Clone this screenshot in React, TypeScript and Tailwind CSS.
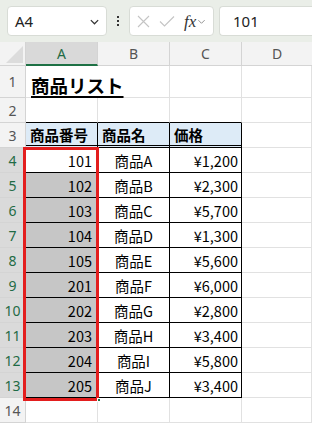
import React from "react";

type Item = { id: number; name: string; price: string };

const items: Item[] = [
  { id: 101, name: "商品A", price: "¥1,200" },
  { id: 102, name: "商品B", price: "¥2,300" },
  { id: 103, name: "商品C", price: "¥5,700" },
  { id: 104, name: "商品D", price: "¥1,300" },
  { id: 105, name: "商品E", price: "¥5,600" },
  { id: 201, name: "商品F", price: "¥6,000" },
  { id: 202, name: "商品G", price: "¥2,800" },
  { id: 203, name: "商品H", price: "¥3,400" },
  { id: 204, name: "商品I", price: "¥5,800" },
  { id: 205, name: "商品J", price: "¥3,400" },
];

const jp = "font-['Noto_Sans_CJK_JP',sans-serif]";
const ui = "font-['Noto_Sans',sans-serif]";

function RowHead({ n, selected, h = "h-[25px]" }: { n: number; selected?: boolean; h?: string }) {
  return (
    <div
      className={`${h} w-[26px] shrink-0 flex items-center justify-center border-r border-b border-[#d4d4d4] text-[14px] ${ui} ${
        selected ? "bg-[#dadada] text-[#1f6b45]" : "bg-[#f3f3f3] text-[#555]"
      }`}
    >
      {n}
    </div>
  );
}

function Toolbar() {
  return (
    <div className="h-[42px] bg-[#eaeee8] flex items-center pl-[7px] gap-0">
      <div className="h-[30px] w-[100px] rounded-[4px] bg-white border border-[#d8dcd6] flex items-center justify-between pl-[7px] pr-[6px]">
        <span className={`text-[15px] text-[#222] ${ui}`}>A4</span>
        <svg width="11" height="11" viewBox="0 0 12 12">
          <path d="M2 4.5 L6 8.5 L10 4.5" fill="none" stroke="#333" strokeWidth="1.3" />
        </svg>
      </div>
      <div className="w-[22px] flex flex-col items-center gap-[2px]">
        <span className="w-[2px] h-[2px] bg-[#333]" />
        <span className="w-[2px] h-[2px] bg-[#333]" />
        <span className="w-[2px] h-[2px] bg-[#333]" />
      </div>
      <div className="h-[30px] w-[85px] rounded-[4px] bg-white border border-[#d8dcd6] flex items-center pl-[7px] gap-[9px]">
        <svg width="13" height="13" viewBox="0 0 13 13">
          <path d="M1 1 L12 12 M12 1 L1 12" stroke="#c4c4c4" strokeWidth="1.1" />
        </svg>
        <svg width="16" height="13" viewBox="0 0 16 13">
          <path d="M1 6.5 L5.5 11 L15 1.5" fill="none" stroke="#c4c4c4" strokeWidth="1.1" />
        </svg>
        <div className="flex items-center gap-[1px]">
          <span className="font-['Liberation_Serif',serif] italic text-[17px] text-[#333] leading-none">fx</span>
          <svg width="9" height="9" viewBox="0 0 10 10">
            <path d="M1.5 3.5 L5 7 L8.5 3.5" fill="none" stroke="#888" strokeWidth="1" />
          </svg>
        </div>
      </div>
      <div className="h-[30px] flex-1 ml-[5px] rounded-l-[4px] bg-white border border-r-0 border-[#d8dcd6] flex items-center pl-[13px]">
        <span className={`text-[15px] text-[#222] ${ui}`}>101</span>
      </div>
    </div>
  );
}

export default function App() {
  const gridCell = "h-full shrink-0 border-r border-b border-[#e1e1e1]";
  return (
    <div className="w-[312px] h-[426px] overflow-hidden bg-white">
      <Toolbar />
      <div className="relative">
        {/* column headers */}
        <div className="h-[24px] flex">
          <div className="w-[26px] shrink-0 bg-[#f3f3f3] border-r border-b border-[#d4d4d4] flex items-end justify-end pr-[2px] pb-[2px]">
            <svg width="17" height="17" viewBox="0 0 17 17">
              <path d="M17 0 L17 17 L0 17 Z" fill="#dcdcdc" />
            </svg>
          </div>
          <div className={`w-[72px] shrink-0 bg-[#d9d9d9] border-r border-[#d4d4d4] border-b-2 border-b-[#1e7145] flex items-center justify-center text-[14px] text-[#1f6b45] ${ui}`}>
            A
          </div>
          {["B", "C"].map((c) => (
            <div key={c} className={`w-[72px] shrink-0 bg-[#f3f3f3] border-r border-b border-[#d4d4d4] flex items-center justify-center text-[14px] text-[#555] ${ui}`}>
              {c}
            </div>
          ))}
          <div className={`flex-1 bg-[#f3f3f3] border-b border-[#d4d4d4] flex items-center justify-center text-[14px] text-[#555] ${ui}`}>
            D
          </div>
        </div>

        {/* row 1 */}
        <div className="h-[32px] flex">
          <RowHead n={1} h="h-[32px]" />
          <div className={`w-[72px] ${gridCell} border-r-0 relative`}>
            <span className={`absolute left-[5px] bottom-[3px] whitespace-nowrap text-[18.5px] font-bold underline underline-offset-[3px] decoration-[1.5px] text-black leading-none ${jp}`}>
              商品リスト
            </span>
          </div>
          <div className={`w-[72px] ${gridCell}`} />
          <div className={`w-[72px] ${gridCell}`} />
          <div className={`flex-1 ${gridCell}`} />
        </div>

        {/* row 2 */}
        <div className="h-[25px] flex">
          <RowHead n={2} />
          <div className={`w-[72px] h-full shrink-0 border-r border-[#e1e1e1] border-b border-b-black`} />
          <div className={`w-[72px] h-full shrink-0 border-r border-[#e1e1e1] border-b border-b-black`} />
          <div className={`w-[72px] h-full shrink-0 border-r border-[#e1e1e1] border-b border-b-black`} />
          <div className={`flex-1 ${gridCell}`} />
        </div>

        {/* row 3 header */}
        <div className="h-[25px] flex">
          <RowHead n={3} />
          {["商品番号", "商品名", "価格"].map((t) => (
            <div
              key={t}
              className={`w-[72px] h-full shrink-0 bg-[#ddebf7] border-r border-black border-b-[3px] border-double flex items-center pl-[4px] pt-[2px] text-[14.5px] font-bold text-black leading-none ${jp}`}
            >
              {t}
            </div>
          ))}
          <div className={`flex-1 ${gridCell}`} />
        </div>

        {/* data rows */}
        {items.map((it, i) => (
          <div key={it.id} className="h-[25px] flex">
            <RowHead n={i + 4} selected />
            <div
              className={`w-[72px] h-full shrink-0 border-r border-b border-black flex items-center justify-end pr-[5px] pt-[2px] text-[14.5px] text-black leading-none ${jp} ${
                i === 0 ? "bg-white" : "bg-[#c6c6c6]"
              }`}
            >
              {it.id}
            </div>
            <div className={`w-[72px] h-full shrink-0 border-r border-b border-black flex items-center justify-center pt-[2px] text-[14.5px] text-black leading-none ${jp}`}>
              {it.name}
            </div>
            <div className={`w-[72px] h-full shrink-0 border-r border-b border-black flex items-center justify-end pr-[3px] pt-[2px] text-[14.5px] text-black leading-none ${jp}`}>
              {it.price}
            </div>
            <div className={`flex-1 ${gridCell}`} />
          </div>
        ))}

        {/* row 14 */}
        <div className="h-[25px] flex">
          <RowHead n={14} />
          <div className={`w-[72px] ${gridCell}`} />
          <div className={`w-[72px] ${gridCell}`} />
          <div className={`w-[72px] ${gridCell}`} />
          <div className={`flex-1 ${gridCell}`} />
        </div>

        {/* red highlight box over A4:A13 */}
        <div className="absolute left-[23px] top-[105px] w-[76px] h-[254px] border-[3px] border-[#e31e1e] pointer-events-none" />
        {/* fill handle */}
        <div className="absolute left-[97px] top-[356px] w-[4px] h-[4px] bg-[#1e7145] border border-white" />
      </div>
    </div>
  );
}
